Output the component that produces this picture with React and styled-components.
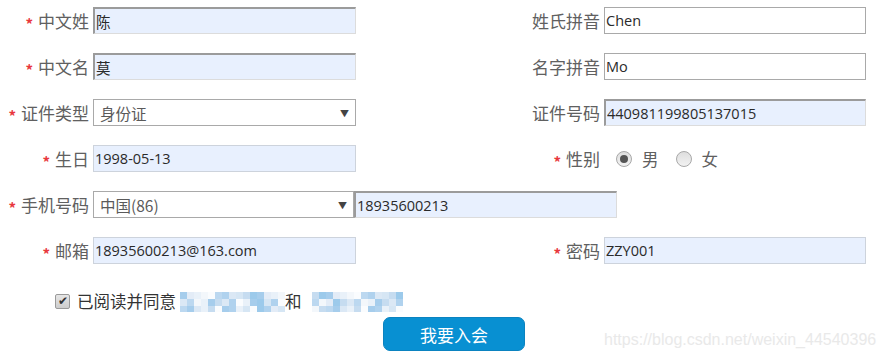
import React from 'react'
import styled, {createGlobalStyle, css} from 'styled-components'

const GlobalStyle = createGlobalStyle`
  body {
    margin: 0;
    background: #fff;
    font-family: "Noto Sans CJK SC", "Open Sans", sans-serif;
  }
`

const Page = styled.div`
  position: relative;
  width: 885px;
  height: 359px;
  overflow: hidden;
`

const Form = styled.form`
  display: flex;
  flex-direction: column;
  gap: 19px;
  padding-top: 7px;
`

const Row = styled.div`
  display: flex;
  align-items: center;
  height: 27px;
`

const Half = styled.div`
  display: flex;
  align-items: center;
  flex-shrink: 0;
  width: ${p => (p.$wide ? 'auto' : '511px')};
`

const Label = styled.label`
  width: 89px;
  margin-right: 4px;
  flex-shrink: 0;
  text-align: right;
  white-space: nowrap;
  font-size: 17px;
  color: #606060;
`

const Star = styled.span`
  color: #e8383d;
  font-size: 15px;
  font-weight: bold;
  margin-right: 5px;
  vertical-align: -2px;
`

const variants = {
  inset: css`
    border-style: solid;
    border-width: 2px 1px 1px 2px;
    border-color: #9b9b9b #dcdcdc #dcdcdc #9b9b9b;
    background: #e8f0fe;
  `,
  filled: css`
    border: 1px solid #cdd3dc;
    background: #e8f0fe;
  `,
  plain: css`
    border: 1px solid #a9a9a9;
    background: #fff;
  `,
}

const Input = styled.input`
  box-sizing: border-box;
  width: ${p => p.$w || 263}px;
  height: 27px;
  margin: 0;
  padding: 0 1px;
  outline: none;
  font-family: "Open Sans", "Noto Sans CJK SC", sans-serif;
  font-size: 14.5px;
  color: #2a2a2a;
  ${p => variants[p.$variant || 'plain']}
`

const SelectBox = styled.div`
  position: relative;
  width: ${p => p.$w || 263}px;
  height: 27px;
  flex-shrink: 0;
`

const Select = styled.select`
  box-sizing: border-box;
  appearance: none;
  width: 100%;
  height: 100%;
  margin: 0;
  padding: 0 0 0 6px;
  border: 1px solid #a9a9a9;
  background: #fff;
  font-family: "Noto Sans CJK SC", "Open Sans", sans-serif;
  font-size: 15.5px;
  color: #5a5a5a;
  outline: none;
`

const Caret = styled.span`
  position: absolute;
  right: 7px;
  top: 8px;
  font-size: 9px;
  color: #444;
  pointer-events: none;
`

const RadioGroup = styled.div`
  display: flex;
  align-items: center;
  margin-left: 12px;
  gap: 17px;
`

const RadioLabel = styled.label`
  display: flex;
  align-items: center;
  gap: 10px;
  font-size: 16.5px;
  color: #606060;
`

const Radio = styled.input`
  appearance: none;
  box-sizing: border-box;
  width: 16px;
  height: 16px;
  margin: 0;
  border-radius: 50%;
  border: 1px solid #a8a8a8;
  background: linear-gradient(#dedede, #f2f2f2);
  display: grid;
  place-items: center;

  &:checked::after {
    content: '';
    width: 8px;
    height: 8px;
    border-radius: 50%;
    background: #555;
  }
`

const AgreeRow = styled.div`
  display: flex;
  align-items: center;
  margin: 27px 0 0 55px;
  height: 20px;
  font-size: 16.5px;
  color: #333;
`

const Check = styled.input`
  appearance: none;
  box-sizing: border-box;
  width: 15px;
  height: 15px;
  margin: 0 7px 0 0;
  border: 1px solid #9a9a9a;
  border-radius: 2px;
  background: linear-gradient(#e6e6e6, #cdcdcd);
  display: grid;
  place-items: center;

  &:checked::after {
    content: '✔';
    font-size: 12px;
    line-height: 1;
    color: #333;
  }
`

const Mosaic = styled.span`
  display: grid;
  grid-template-columns: repeat(${p => p.$cols}, 7px);
  grid-template-rows: 7px 7px 6px;
  margin: 0 ${p => p.$mr || 0}px 0 ${p => p.$ml || 0}px;
  align-self: flex-start;
  margin-top: 1px;
`

const Cell = styled.span`
  background: ${p => p.$c};
`

const Submit = styled.button`
  margin: 6px 0 0 383px;
  width: 142px;
  height: 34px;
  border: 1px solid #0b83c0;
  border-radius: 7px;
  background: #0890d2;
  color: #fff;
  font-family: "Noto Sans CJK SC", sans-serif;
  font-size: 17px;
  cursor: pointer;
`

const Watermark = styled.div`
  position: absolute;
  left: 604px;
  top: 331px;
  font-family: "Liberation Sans", Arial, sans-serif;
  font-size: 16px;
  color: #e9e9e9;
  pointer-events: none;
`

const shades = ['#e3ecf7', '#c6dcf0', '#b0d2ee', '#f3f7fb', '#a6cdec', '#d6e6f4', '#bcd8f0', '#e9f1f9', '#9ccaeb', '#dbe8f5', '#fafcfe']

function mosaicColors(cols, seed) {
  const out = []
  for (let r = 0; r < 3; r++) {
    for (let c = 0; c < cols; c++) {
      const i = (c * 7 + r * 5 + seed * 3 + ((c * r + seed) % 4)) % shades.length
      out.push(r === 2 ? shades[(i + 3) % shades.length] : shades[i])
    }
  }
  return out
}

function Field({label, required, children, wide}) {
  return (
    <Half $wide={wide}>
      <Label>
        {required && <Star>*</Star>}
        {label}
      </Label>
      {children}
    </Half>
  )
}

function Blur({cols, seed, ml, mr}) {
  return (
    <Mosaic $cols={cols} $ml={ml} $mr={mr}>
      {mosaicColors(cols, seed).map((c, i) => (
        <Cell key={i} $c={c} />
      ))}
    </Mosaic>
  )
}

export default function App() {
  return (
    <Page>
      <GlobalStyle />
      <Form onSubmit={e => e.preventDefault()}>
        <Row>
          <Field label="中文姓" required>
            <Input $variant="inset" defaultValue="陈" />
          </Field>
          <Field label="姓氏拼音" wide>
            <Input $variant="plain" $w={262} defaultValue="Chen" />
          </Field>
        </Row>
        <Row>
          <Field label="中文名" required>
            <Input $variant="inset" defaultValue="莫" />
          </Field>
          <Field label="名字拼音" wide>
            <Input $variant="plain" $w={262} defaultValue="Mo" />
          </Field>
        </Row>
        <Row>
          <Field label="证件类型" required>
            <SelectBox>
              <Select defaultValue="id">
                <option value="id">身份证</option>
                <option value="passport">护照</option>
              </Select>
              <Caret>▼</Caret>
            </SelectBox>
          </Field>
          <Field label="证件号码" wide>
            <Input $variant="inset" $w={262} defaultValue="440981199805137015" />
          </Field>
        </Row>
        <Row>
          <Field label="生日" required>
            <Input $variant="filled" defaultValue="1998-05-13" />
          </Field>
          <Field label="性别" required wide>
            <RadioGroup>
              <RadioLabel>
                <Radio type="radio" name="sex" defaultChecked />男
              </RadioLabel>
              <RadioLabel>
                <Radio type="radio" name="sex" />女
              </RadioLabel>
            </RadioGroup>
          </Field>
        </Row>
        <Row>
          <Field label="手机号码" required wide>
            <SelectBox $w={261}>
              <Select defaultValue="86">
                <option value="86">中国(86)</option>
              </Select>
              <Caret>▼</Caret>
            </SelectBox>
            <Input $variant="inset" defaultValue="18935600213" />
          </Field>
        </Row>
        <Row>
          <Field label="邮箱" required>
            <Input $variant="filled" defaultValue="18935600213@163.com" />
          </Field>
          <Field label="密码" required wide>
            <Input $variant="filled" $w={262} defaultValue="ZZY001" />
          </Field>
        </Row>
      </Form>
      <AgreeRow>
        <Check type="checkbox" defaultChecked />
        已阅读并同意
        <Blur cols={15} seed={1} ml={4} />
        和
        <Blur cols={13} seed={4} ml={10} />
      </AgreeRow>
      <Submit type="button">我要入会</Submit>
      <Watermark>https://blog.csdn.net/weixin_44540396</Watermark>
    </Page>
  )
}
